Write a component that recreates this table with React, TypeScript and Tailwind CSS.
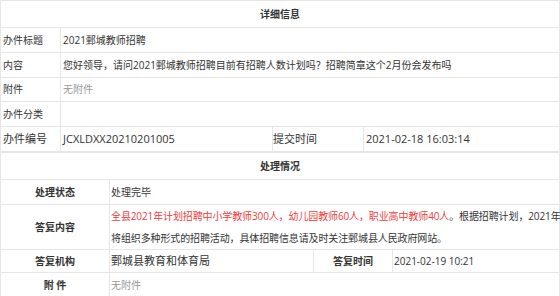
import React from 'react';

const cell = 'border border-[#e6e6e6] align-middle';
const label = `${cell} pl-[2px] font-normal text-left`;
const value = `${cell} pl-[2px]`;
const label2 = `${cell} text-center font-bold`;
const value2 = `${cell} pl-[1px]`;

const App: React.FC = () => {
  return (
    <div className="w-[560px] h-[296px] overflow-hidden bg-white text-[#333] font-['Open_Sans','Noto_Sans_CJK_SC',sans-serif]">
      <table className="w-[560px] border-collapse table-fixed text-[10px]">
        <colgroup>
          <col className="w-[60px]" />
          <col className="w-[212px]" />
          <col className="w-[91px]" />
          <col />
        </colgroup>
        <tbody>
          <tr className="h-[27px]">
            <td colSpan={4} className={`${cell} text-center font-bold`}>详细信息</td>
          </tr>
          <tr className="h-[25px]">
            <td className={label}>办件标题</td>
            <td colSpan={3} className={value}>2021鄄城教师招聘</td>
          </tr>
          <tr className="h-[25px]">
            <td className={label}>内容</td>
            <td colSpan={3} className={value}>
              您好领导，请问2021鄄城教师招聘目前有招聘人数计划吗？招聘简章这个2月份会发布吗
            </td>
          </tr>
          <tr className="h-[24px]">
            <td className={label}>附件</td>
            <td colSpan={3} className={`${value} text-[#999]`}>无附件</td>
          </tr>
          <tr className="h-[25px]">
            <td className={label}>办件分类</td>
            <td colSpan={3} className={value}></td>
          </tr>
          <tr className="h-[25px] text-[11px]">
            <td className={label}>办件编号</td>
            <td className={value}>JCXLDXX20210201005</td>
            <td className={`${cell} pl-0`}>提交时间</td>
            <td className={value}>2021-02-18 16:03:14</td>
          </tr>
        </tbody>
      </table>

      <table className="w-[560px] border-collapse table-fixed text-[10px]">
        <colgroup>
          <col className="w-[109px]" />
          <col className="w-[204px]" />
          <col className="w-[79px]" />
          <col />
        </colgroup>
        <tbody>
          <tr className="h-[27px]">
            <td colSpan={4} className={`${cell} text-center font-bold`}>处理情况</td>
          </tr>
          <tr className="h-[25px]">
            <td className={label2}>处理状态</td>
            <td colSpan={3} className={value2}>处理完毕</td>
          </tr>
          <tr className="h-[44px]">
            <td className={label2}>答复内容</td>
            <td colSpan={3} className={`${value2} leading-[22px] whitespace-nowrap tracking-[-0.12px]`}>
              <span className="text-[#f03c3c]">
                全县2021年计划招聘中小学教师300人，幼儿园教师60人，职业高中教师40人
              </span>
              。根据招聘计划，2021年
              <br />
              将组织多种形式的招聘活动，具体招聘信息请及时关注鄄城县人民政府网站。
            </td>
          </tr>
          <tr className="h-[23px]">
            <td className={label2}>答复机构</td>
            <td className={`${value2} text-[11px]`}>鄄城县教育和体育局</td>
            <td className={label2}>答复时间</td>
            <td className={value2}>2021-02-19 10:21</td>
          </tr>
          <tr className="h-[26px]">
            <td className={label2}>附 件</td>
            <td colSpan={3} className={`${value2} text-[#999]`}>无附件</td>
          </tr>
        </tbody>
      </table>
    </div>
  );
};

export default App;
